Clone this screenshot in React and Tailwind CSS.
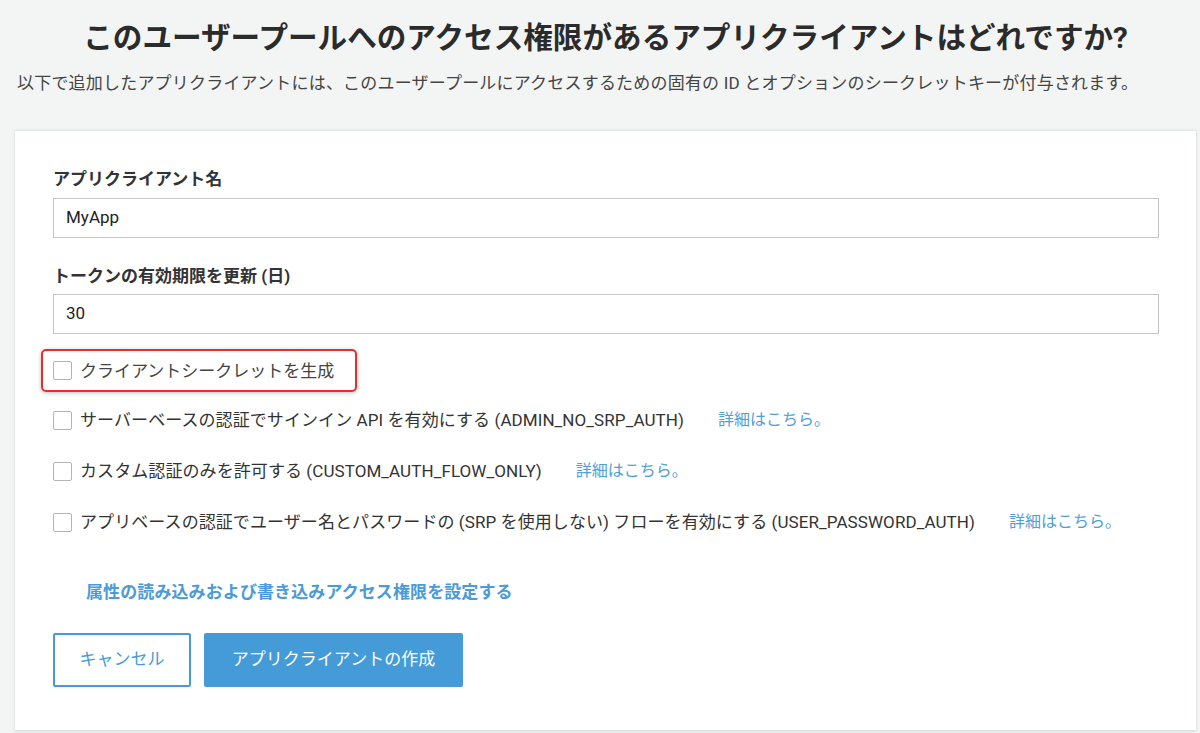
import React from "react";

const font = { fontFamily: 'Roboto, "Noto Sans CJK JP", sans-serif' };

function Box({ focused }) {
  return (
    <span
      className={
        "inline-block w-[19px] h-[19px] shrink-0 rounded-[2px] bg-white border " +
        (focused ? "border-[#8dbde6]" : "border-[#b3b5b5]")
      }
    />
  );
}

function Row({ text, link, className = "" }) {
  return (
    <div className={"flex items-center h-[24px] " + className}>
      <Box />
      <span className="ml-[8px] text-[17px] leading-[24px] text-[#333] whitespace-nowrap tracking-[0.08px]">{text}</span>
      {link && (
        <span className="ml-[34px] text-[16px] leading-[24px] text-[#4f9ed8] whitespace-nowrap">詳細はこちら。</span>
      )}
    </div>
  );
}

export default function App() {
  return (
    <div className="w-[1200px] h-[733px] bg-[#f3f5f5] overflow-hidden" style={font}>
      <div className="pl-[15px] pr-[4px] pt-[18px]">
        <h1 className="text-center text-[29.6px] leading-[40px] font-bold text-[#2b2b2b] whitespace-nowrap">
          このユーザープールへのアクセス権限があるアプリクライアントはどれですか?
        </h1>
        <p className="mt-[13px] pl-[2px] text-[17px] leading-[24px] text-[#444] whitespace-nowrap tracking-[0.2px]">
          以下で追加したアプリクライアントには、このユーザープールにアクセスするための固有の ID とオプションのシークレットキーが付与されます。
        </p>
        <div className="mt-[35px] bg-white border-t border-[#e6e8e8] shadow-[0_1px_3px_rgba(0,0,0,0.15)] pl-[38px] pr-[37px] pt-[36px] pb-[43px] flex flex-col">
          <label className="text-[17px] leading-[24px] font-bold text-[#333]">アプリクライアント名</label>
          <div className="mt-[7px] h-[40px] border border-[#c4c6c6] flex items-center px-[12px] text-[17px] text-[#222]">
            MyApp
          </div>
          <label className="mt-[26px] text-[17px] leading-[24px] font-bold text-[#333]">トークンの有効期限を更新 (日)</label>
          <div className="mt-[6px] h-[40px] border border-[#c4c6c6] flex items-center px-[12px] text-[17px] text-[#222]">
            30
          </div>
          <div className="mt-[15px] -ml-[12px] self-start h-[43px] w-[316px] border-2 border-[#ee2a2a] rounded-[5px] shadow-[0_1px_4px_rgba(0,0,0,0.25)] flex items-center pl-[10px]">
            <Box focused />
            <span className="ml-[8px] text-[17px] leading-[24px] text-[#444] whitespace-nowrap">クライアントシークレットを生成</span>
          </div>
          <Row className="mt-[16px]" text="サーバーベースの認証でサインイン API を有効にする (ADMIN_NO_SRP_AUTH)" link />
          <Row className="mt-[27px]" text="カスタム認証のみを許可する (CUSTOM_AUTH_FLOW_ONLY)" link />
          <Row className="mt-[27px]" text="アプリベースの認証でユーザー名とパスワードの (SRP を使用しない) フローを有効にする (USER_PASSWORD_AUTH)" link />
          <div className="mt-[46px] ml-[33px] text-[17px] leading-[24px] font-bold text-[#4a9bd7] whitespace-nowrap tracking-[0.1px]">
            属性の読み込みおよび書き込みアクセス権限を設定する
          </div>
          <div className="mt-[29px] flex gap-[13px]">
            <button className="h-[54px] w-[138px] border-2 border-[#449bd8] bg-white text-[#449bd8] text-[17px] rounded-[2px]">
              キャンセル
            </button>
            <button className="h-[54px] w-[259px] bg-[#449bd8] text-white text-[17px] rounded-[2px]">
              アプリクライアントの作成
            </button>
          </div>
        </div>
      </div>
    </div>
  );
}
